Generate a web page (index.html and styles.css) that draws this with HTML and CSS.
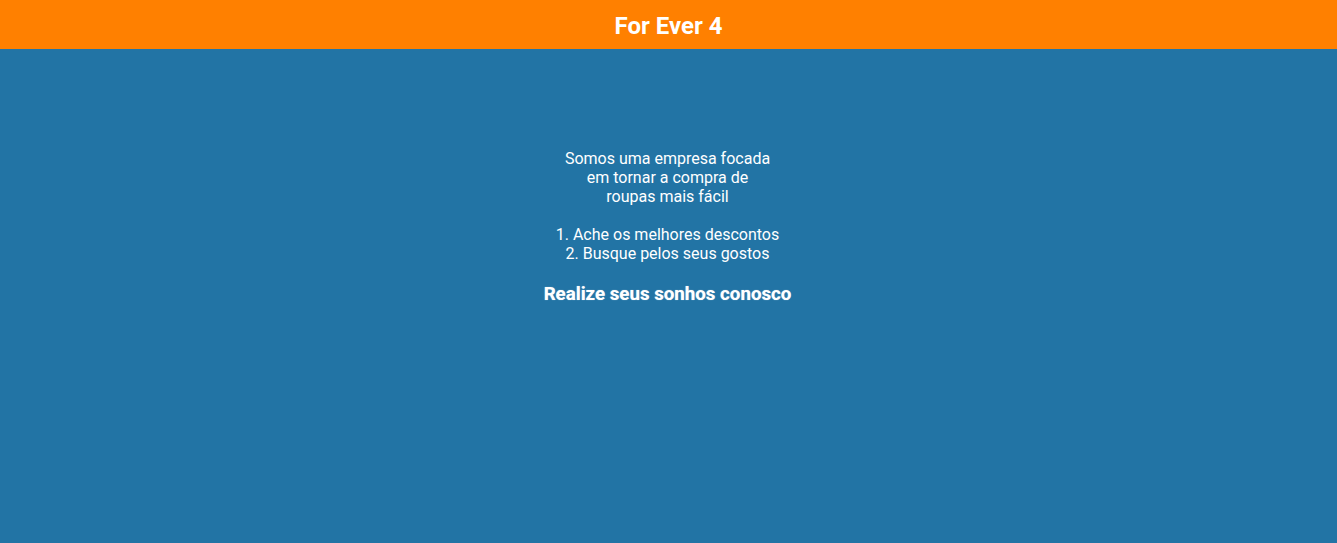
FILE: index.html
```html
<!DOCTYPE html>
<html lang="pt">
<head>
<meta charset="utf-8">
<title>For Ever 4</title>
<link rel="stylesheet" href="styles.css">
</head>
<body>
<header class="topbar">
  <h1 class="brand">For Ever 4</h1>
</header>
<main class="content">
  <p class="intro">Somos uma empresa focada<br>em tornar a compra de<br>roupas mais fácil</p>
  <ol class="steps">
    <li>1. Ache os melhores descontos</li>
    <li>2. Busque pelos seus gostos</li>
  </ol>
  <h2 class="slogan">Realize seus sonhos conosco</h2>
</main>
</body>
</html>
```
FILE: styles.css
```css
html, body {
  margin: 0;
  padding: 0;
  height: 100%;
}
body {
  background: #2274a5;
  font-family: Roboto, "Liberation Sans", sans-serif;
  color: #fff;
  display: flex;
  flex-direction: column;
}
.topbar {
  background: #ff8000;
  height: 49px;
  box-sizing: border-box;
  padding-top: 3px;
  display: flex;
  align-items: center;
  justify-content: center;
  flex-shrink: 0;
}
.brand {
  margin: 0;
  font-size: 24px;
  font-weight: 700;
  line-height: 1;
}
.content {
  display: flex;
  flex-direction: column;
  align-items: center;
  text-align: center;
  padding-top: 100px;
  padding-right: 2px;
  font-size: 16px;
  line-height: 19px;
}
.intro {
  margin: 0;
}
.steps {
  list-style: none;
  margin: 19px 0 0;
  padding: 0;
}
.slogan {
  margin: 20px 0 0;
  font-size: 18.72px;
  font-weight: 700;
  line-height: 1.2;
  text-shadow: 0 0 1px rgba(255, 255, 255, 0.6);
}
```
